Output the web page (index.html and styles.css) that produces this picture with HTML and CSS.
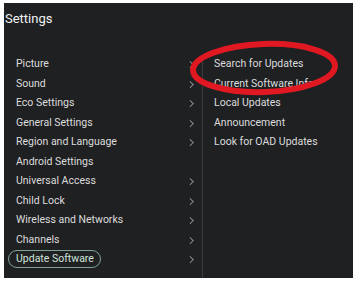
FILE: index.html
```html
<!DOCTYPE html>
<html>
<head>
<meta charset="utf-8">
<link rel="stylesheet" href="styles.css">
</head>
<body>
<div class="screen">
  <div class="title">Settings</div>
  <div class="panes">
    <ul class="menu">
      <li class="item"><span>Picture</span><i class="chev"></i></li>
      <li class="item"><span>Sound</span><i class="chev"></i></li>
      <li class="item"><span>Eco Settings</span><i class="chev"></i></li>
      <li class="item"><span>General Settings</span><i class="chev"></i></li>
      <li class="item"><span>Region and Language</span><i class="chev"></i></li>
      <li class="item"><span>Android Settings</span></li>
      <li class="item"><span>Universal Access</span><i class="chev"></i></li>
      <li class="item"><span>Child Lock</span><i class="chev"></i></li>
      <li class="item"><span>Wireless and Networks</span><i class="chev"></i></li>
      <li class="item"><span>Channels</span><i class="chev"></i></li>
      <li class="item"><span class="pill">Update Software</span><i class="chev"></i></li>
    </ul>
    <ul class="sub">
      <li class="item">Search for Updates</li>
      <li class="item">Current Software Info</li>
      <li class="item">Local Updates</li>
      <li class="item">Announcement</li>
      <li class="item">Look for OAD Updates</li>
    </ul>
  </div>
  <svg class="circle" width="160" height="64" viewBox="0 0 160 64">
    <ellipse cx="80" cy="32" rx="71" ry="24" fill="none" stroke="#e01822" stroke-width="6" transform="rotate(-2 80 32)"/>
  </svg>
</div>
</body>
</html>
```
FILE: styles.css
```css
* { box-sizing: border-box; }
html, body { margin: 0; padding: 0; background: #fff; }
body { width: 360px; height: 284px; overflow: hidden; }
.screen {
  position: relative;
  margin: 3px 7px 0 4px;
  width: 349px;
  height: 275px;
  background: #1f2022;
  font-family: Roboto, "Noto Sans", sans-serif;
  color: #dcdcdc;
}
.title {
  font-size: 13px;
  line-height: 16px;
  padding: 8px 0 0 1px;
  color: #f2f2f2;
}
.panes {
  display: grid;
  grid-template-columns: 199px 1fr;
  margin-top: 27.5px;
  height: 223.5px;
}
ul { list-style: none; margin: 0; padding: 0; }
.menu { border-right: 1px solid #3a3b3d; }
.item {
  height: 19.5px;
  display: flex;
  align-items: center;
  font-size: 10.5px;
  line-height: 14px;
  padding-left: 12px;
}
.menu .item { justify-content: space-between; padding-right: 8px; }
.sub .item { padding-left: 11px; }
.chev {
  width: 4.5px;
  height: 4.5px;
  border-top: 1px solid #8a8b8d;
  border-right: 1px solid #8a8b8d;
  transform: rotate(45deg);
  margin-right: 2px;
}
.pill {
  margin-left: -8px;
  padding: 1px 6px 1px 7px;
  border: 1px solid #7fa394;
  border-radius: 10px;
  color: #cfe3da;
}
.circle {
  position: absolute;
  left: 180px;
  top: 33px;
}
```
